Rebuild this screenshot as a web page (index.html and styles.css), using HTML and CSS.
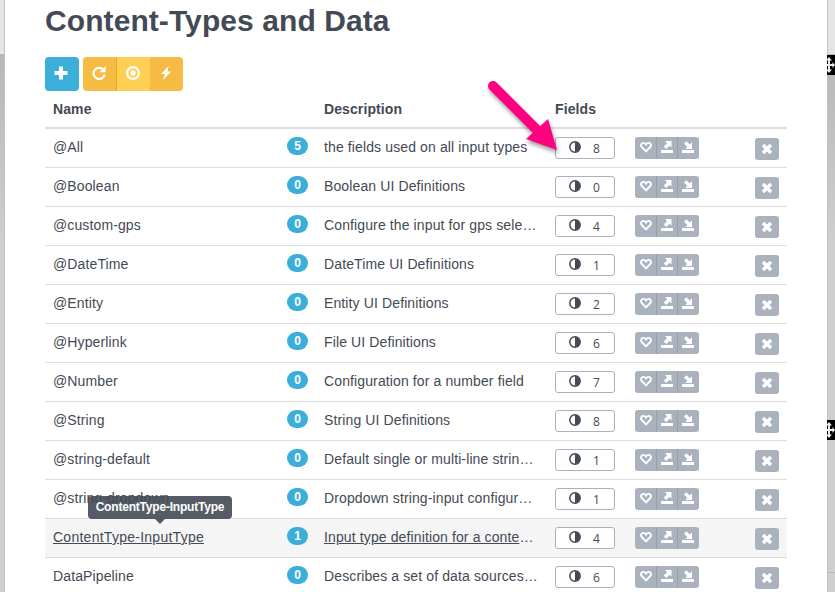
FILE: index.html
```html
<!DOCTYPE html>
<html lang="en">
<head>
  <meta charset="UTF-8" />
  <meta name="viewport" content="width=device-width, initial-scale=1.0" />
  <title>Content-Types and Data</title>
  <link rel="stylesheet" href="styles.css">
</head>
<body>

  <!-- Icons -->
  <svg class="sprite">
    <symbol id="plus" viewBox="0 0 14 14"><path d="M5 .5h4V5h4.5v4H9v4.500H5V9H.5V5H5z"/></symbol>
    <symbol id="repeat" viewBox="0 0 14 14">
      <path d="M10.8 3.1A5.600 5.600 0 1 0 12.700 8.500" fill="none" stroke="currentColor" stroke-width="2.200"/>
      <path d="M13.700 0v6.200H7.600z"/>
    </symbol>
    <symbol id="record" viewBox="0 0 14 14">
      <circle cx="7" cy="7" r="5.900" fill="none" stroke="currentColor" stroke-width="2.200"/>
      <circle cx="7" cy="7" r="2.700"/>
    </symbol>
    <symbol id="flash" viewBox="0 0 14 14"><path d="M9.700 0 2 8h3.900L4 14l8.200-8.600H8.300z"/></symbol>
    <symbol id="adjust" viewBox="0 0 12 12">
      <circle cx="6" cy="6" r="5.200" fill="none" stroke="currentColor" stroke-width="1.500"/>
      <path d="M6 1a5 5 0 0 1 0 10z"/>
    </symbol>
    <symbol id="heart" viewBox="0 0 12 12">
      <path d="M6 10.400 1.800 6C.2 4.200 1.300 1.900 3.300 1.900 4.600 1.900 5.400 2.600 6 3.500 6.600 2.600 7.400 1.900 8.700 1.900c2 0 3.100 2.300 1.500 4.100z" fill="none" stroke="currentColor" stroke-width="1.900"/>
    </symbol>
    <symbol id="export" viewBox="0 0 12 12"><path d="M0 9h12v3H0zM4 0h6.500v6.500L8.600 4.700 5.200 8 2.800 5.600l3.300-3.300z"/></symbol>
    <symbol id="import" viewBox="0 0 12 12"><path d="M0 9h12v3H0zM10 1.200V8H3.300l2-2L2 2.600 4.400.2l3.400 3.300z"/></symbol>
    <symbol id="remove" viewBox="0 0 12 12"><path d="M3.200.8 6 3.500 8.800.8l2.400 2.400L8.500 6l2.700 2.800-2.400 2.400L6 8.500l-2.800 2.700L.8 8.800 3.500 6 .8 3.200z"/></symbol>
    <symbol id="move" viewBox="0 0 8 20"><path d="M2 2l3 3.500H3V9h2.500V7L8 10l-2.500 3v-2H3v3.500h2L2 18l-3-3.500h2V11H0V9h1V5.500h-2z"/></symbol>
  </svg>

  <div class="page">
    <aside class="edge"></aside>

    <main class="dialog">
      <h1>Content-Types and Data</h1>

      <div class="toolbar">
        <button class="btn btn-add"><svg><use href="#plus"/></svg></button>
        <div class="btn-group">
          <button class="btn"><svg><use href="#repeat"/></svg></button>
          <button class="btn light"><svg><use href="#record"/></svg></button>
          <button class="btn"><svg><use href="#flash"/></svg></button>
        </div>
      </div>

      <div class="row head">
        <span>Name</span>
        <span></span>
        <span>Description</span>
        <span>Fields</span>
      </div>
      <div id="types"></div>
    </main>

    <aside class="edge edge-right">
      <svg class="handle"><use href="#move"/></svg>
      <svg class="handle lower"><use href="#move"/></svg>
      <div class="divider"></div>
    </aside>
  </div>

  <!-- Pointer to the fields button -->
  <svg class="pointer" viewBox="0 0 90 90">
    <path d="M13 16 60 63" stroke="#ff0080" stroke-width="10" stroke-linecap="round"/>
    <path d="M77 80 68 49 46 69z" fill="#ff0080"/>
  </svg>

  <script>
    const types = [
      ['@All', 5, 'the fields used on all input types', 8],
      ['@Boolean', 0, 'Boolean UI Definitions', 0],
      ['@custom-gps', 0, 'Configure the input for gps sele…', 4],
      ['@DateTime', 0, 'DateTime UI Definitions', 1],
      ['@Entity', 0, 'Entity UI Definitions', 2],
      ['@Hyperlink', 0, 'File UI Definitions', 6],
      ['@Number', 0, 'Configuration for a number field', 7],
      ['@String', 0, 'String UI Definitions', 8],
      ['@string-default', 0, 'Default single or multi-line strin…', 1],
      ['@string-dropdown', 0, 'Dropdown string-input configur…', 1],
      ['ContentType-InputType', 1, 'Input type definition for a conte…', 4],
      ['DataPipeline', 0, 'Describes a set of data sources…', 6]
    ];
    const hovered = 'ContentType-InputType';

    const icon = name => `<svg><use href="#${name}"/></svg>`;

    document.getElementById('types').innerHTML = types.map(([name, items, text, fields]) => `
      <div class="row ${name === hovered ? 'hover' : ''}">
        <span class="name"><a>${name}</a>${name === hovered ? `<span class="tip">${name}</span>` : ''}</span>
        <span class="badge">${items}</span>
        <span class="text"><a>${text.replace('…', '')}</a>${text.endsWith('…') ? '…' : ''}</span>
        <button class="fields">${icon('adjust')}<span>${fields}</span></button>
        <div class="actions">
          <button>${icon('heart')}</button>
          <button>${icon('export')}</button>
          <button>${icon('import')}</button>
        </div>
        <button class="remove">${icon('remove')}</button>
      </div>`).join('');
  </script>

</body>
</html>
```
FILE: styles.css
```css
* { margin: 0; padding: 0; box-sizing: border-box; }
body {
  background: #fff;
  color: #434a54;
  font-family: "Liberation Sans", Arial, sans-serif;
  font-size: 14px;
  line-height: 20px;
  overflow: hidden;
}
button { border: 0; color: #fff; font: inherit; }
svg { display: block; fill: currentColor; }
.sprite { display: none; }

.page {
  display: flex;
  height: 592px;
  overflow: hidden;
}
.edge {
  position: relative;
  width: 5px;
  background: linear-gradient(#e5e5e5 54px, #b7b7b7 54px, #cfcfcf 250px);
  border-right: 1px solid #c4c4c4;
}
.edge-right {
  width: 8px;
  border-right: 0;
  border-left: 1px solid #c4c4c4;
}
.handle {
  position: absolute;
  left: -1px;
  top: 55px;
  width: 8px;
  height: 20px;
  background: #000;
  color: #eee;
}
.lower { top: 420px; }
.divider {
  margin-top: 572px;
  border-top: 1px solid #b8b8b8;
}

.dialog {
  width: 822px;
  padding: 0 40px;
}
h1 {
  height: 57px;
  padding-top: 3px;
  font-size: 30px;
  letter-spacing: 0.08px;
  line-height: 36px;
}

/* Toolbar */
.toolbar {
  display: flex;
  gap: 4px;
}
.btn {
  display: grid;
  place-items: center;
  width: 33px;
  height: 34px;
  padding: 0 2px 2px 0;
  background: #f6bb42;
}
.btn svg { width: 14px; height: 14px; }
.btn-add {
  width: 34px;
  background: #3bafda;
  border-radius: 4px;
}
.btn-group {
  display: flex;
  overflow: hidden;
  border-radius: 4px;
}
.btn-group .btn:first-child {
  width: 34px;
  padding-right: 1px;
  border-right: 1px solid #f4a911;
}
.btn-group .light { background: #ffce54; }

/* Table */
.row {
  display: grid;
  grid-template-columns: 234px 37px 231px 80px 120px 24px;
  align-items: center;
  width: 742px;
  height: 39px;
  padding: 0 8px 1px;
  border-bottom: 1px solid #ddd;
}
.head {
  height: 38px;
  padding-bottom: 0;
  border-bottom-width: 2px;
  font-weight: bold;
  letter-spacing: 0.1px;
}
.hover { background: #f5f5f5; }
.hover a { text-decoration: underline; }
.name, .text {
  margin-top: -1px;
  letter-spacing: 0.12px;
  white-space: nowrap;
}
.name { position: relative; }
.hover .name { letter-spacing: 0.26px; }
.badge {
  width: 21px;
  height: 18px;
  margin-top: -3px;
  background: #3bafda;
  border-radius: 9px;
  color: #fff;
  font-size: 12px;
  font-weight: bold;
  line-height: 18px;
  text-align: center;
}
.fields {
  display: flex;
  align-items: center;
  width: 60px;
  height: 22px;
  margin-top: 1px;
  padding-left: 13px;
  background: #fff;
  border: 1px solid #aab2bd;
  border-radius: 3px;
  color: #434a54;
  font: 12px "Open Sans", sans-serif;
}
.fields svg {
  width: 12px;
  height: 12px;
  margin: -2px 12px 0 0;
}
.fields span { padding-top: 1px; }
.actions {
  display: grid;
  grid-template-columns: 21px 21px 22px;
  width: 64px;
  margin-top: 1px;
  overflow: hidden;
  border-radius: 3px;
}
.actions button {
  display: grid;
  place-items: center;
  height: 22px;
  padding: 0 0 2px 1px;
  background: #aab2bd;
}
.actions button + button {
  padding: 0 1px 2px 0;
  border-left: 1px solid #96a0ad;
}
.actions svg, .remove svg { width: 12px; height: 12px; }
.remove {
  display: grid;
  place-items: center;
  width: 24px;
  height: 22px;
  margin-top: 3px;
  background: #aab2bd;
  border-radius: 3px;
}

/* Tooltip */
.tip {
  position: absolute;
  left: 35px;
  bottom: 28px;
  width: 144px;
  height: 23px;
  background: rgba(67, 74, 84, 0.9);
  border-radius: 4px;
  color: #fff;
  font-size: 12px;
  font-weight: bold;
  letter-spacing: -0.2px;
  line-height: 22px;
  text-align: center;
}
.tip::after {
  content: '';
  position: absolute;
  left: 67px;
  top: 23px;
  border: 5px solid transparent;
  border-top-color: rgba(67, 74, 84, 0.9);
  border-bottom: 0;
}

.pointer {
  position: absolute;
  left: 480px;
  top: 70px;
  width: 90px;
  height: 90px;
  filter: drop-shadow(1px 3px 2px rgba(0, 0, 0, 0.4));
}
```
